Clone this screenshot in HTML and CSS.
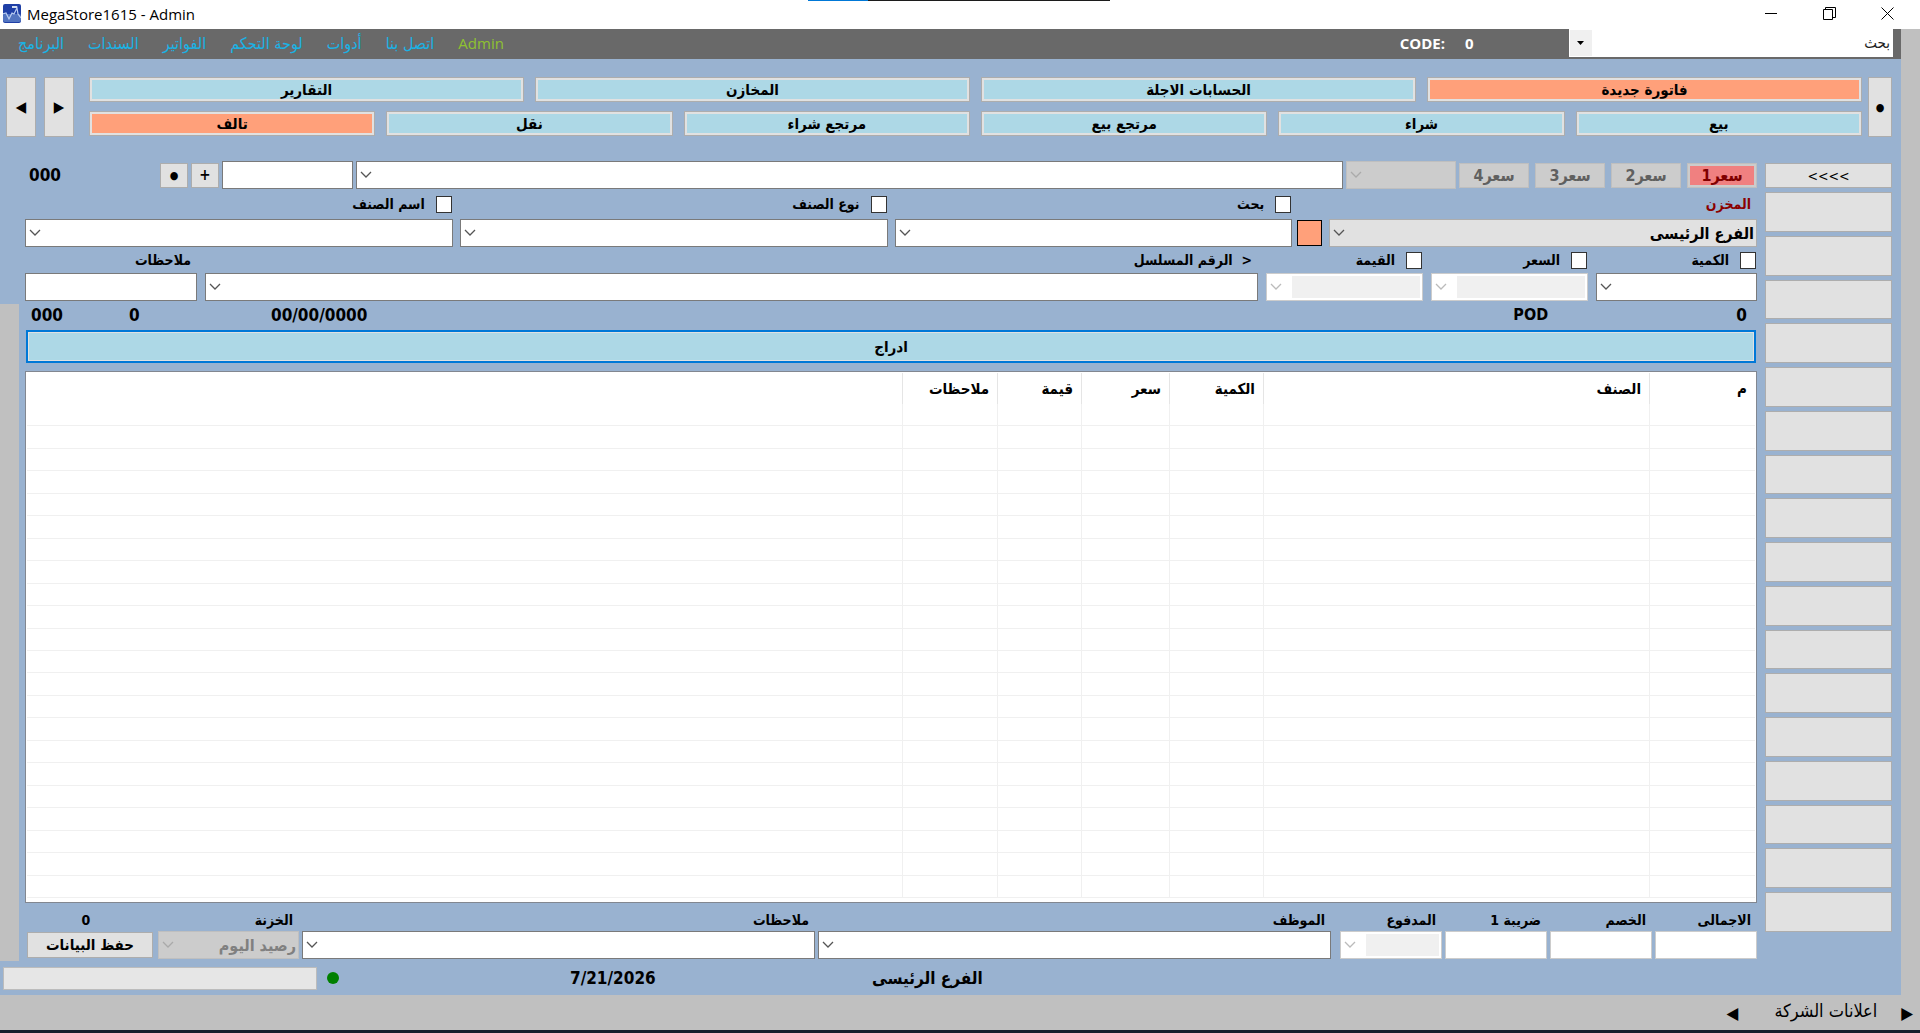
FILE: index.html
```html
<!DOCTYPE html>
<html lang="ar">
<head>
	<meta charset="utf-8">
	<title>MegaStore1615 - Admin</title>
	<link rel="stylesheet" href="styles.css">
</head>
<body>
<header class="titlebar">
	<svg class="logo" width="18" height="19" viewBox="0 0 18 19">
		<rect width="18" height="19" rx="2" fill="#1f3fa6"/>
		<rect y="10" width="18" height="8" rx="2" fill="#5274c0"/>
		<path d="M0 10l3-1 3 6 3-6 2 1 3-6 1 6 3 4" fill="none" stroke="#b9cdf2" stroke-width="1.2"/>
		<rect x="9" y="2" width="5" height="2" fill="#d5dff0"/>
	</svg>
	<span class="caption">MegaStore1615 - Admin</span>
	<span class="dock"></span>
	<button class="win" aria-label="Minimize"><svg width="13" height="13"><path d="M0 6.5h12" stroke="#000"/></svg></button>
	<button class="win" aria-label="Restore"><svg width="13" height="13"><path d="M.5 2.5h9v10h-9zM2.5 2.5v-2h10v10h-3" fill="none" stroke="#000"/></svg></button>
	<button class="win" aria-label="Close"><svg width="13" height="13"><path d="M.5 .5l12 12M12.5 .5l-12 12" stroke="#000"/></svg></button>
</header>

<div class="frame">
<div class="screen">
	<nav class="menubar">
		<a href="#">البرنامج</a>
		<a href="#">السندات</a>
		<a href="#">الفواتير</a>
		<a href="#">لوحة التحكم</a>
		<a href="#">أدوات</a>
		<a href="#">اتصل بنا</a>
		<a href="#" class="user">Admin</a>
		<span class="code">CODE:</span>
		<span class="codenum">0</span>
		<select class="search" aria-label="بحث"><option>بحث</option></select>
	</nav>

	<div class="toolbar">
		<button class="btn tall">◀</button>
		<button class="btn tall">▶</button>
		<div class="tabs">
			<div class="tabrow">
				<button class="btn tab">التقارير</button>
				<button class="btn tab">المخازن</button>
				<button class="btn tab">الحسابات الاجلة</button>
				<button class="btn tab on">فاتورة جديدة</button>
			</div>
			<div class="tabrow">
				<button class="btn tab on">تالف</button>
				<button class="btn tab">نقل</button>
				<button class="btn tab">مرتجع شراء</button>
				<button class="btn tab">مرتجع بيع</button>
				<button class="btn tab">شراء</button>
				<button class="btn tab">بيع</button>
			</div>
		</div>
		<button class="btn dot">●</button>
	</div>

	<div class="main">
		<div class="work">
			<div class="entry">
				<div class="row top">
					<span class="count">000</span>
					<button class="btn small bullet">●</button>
					<button class="btn small">+</button>
					<input class="box qty" type="text" aria-label="الكود">
					<select class="box grow" aria-label="العميل"><option></option></select>
					<select class="box flat" aria-label="السعر" disabled><option></option></select>
					<div class="prices">
						<button class="btn" disabled>سعر4</button>
						<button class="btn" disabled>سعر3</button>
						<button class="btn" disabled>سعر2</button>
						<button class="btn picked" disabled>سعر1</button>
					</div>
				</div>

				<div class="row names">
					<div class="field">
						<div class="lbl"><label for="c_name">اسم الصنف</label><input type="checkbox" id="c_name"></div>
						<select class="box" aria-label="اسم الصنف"><option></option></select>
					</div>
					<div class="field">
						<div class="lbl"><label for="c_type">نوع الصنف</label><input type="checkbox" id="c_type"></div>
						<select class="box" aria-label="نوع الصنف"><option></option></select>
					</div>
					<div class="pair">
						<div class="field">
							<div class="lbl"><label for="c_find">بحث</label><input type="checkbox" id="c_find"></div>
							<select class="box" aria-label="بحث"><option></option></select>
						</div>
						<button class="swatch" aria-label="لون"></button>
					</div>
					<div class="field">
						<div class="lbl plain red"><label for="store">المخزن</label></div>
						<select class="box list" id="store"><option>الفرع الرئيسى</option></select>
					</div>
				</div>

				<div class="row amounts">
					<div class="field">
						<div class="lbl plain"><label for="note">ملاحظات</label></div>
						<input class="box" type="text" id="note">
					</div>
					<div class="field">
						<div class="lbl plain"><label for="serial" dir="ltr">الرقم المسلسل &nbsp;&lrm;&gt;</label></div>
						<select class="box" id="serial"><option></option></select>
					</div>
					<div class="field">
						<div class="lbl"><label for="c_val">القيمة</label><input type="checkbox" id="c_val"></div>
						<select class="box off" aria-label="القيمة" disabled><option></option></select>
					</div>
					<div class="field">
						<div class="lbl"><label for="c_price">السعر</label><input type="checkbox" id="c_price"></div>
						<select class="box off" aria-label="السعر" disabled><option></option></select>
					</div>
					<div class="field">
						<div class="lbl"><label for="c_qty">الكمية</label><input type="checkbox" id="c_qty"></div>
						<select class="box" aria-label="الكمية"><option></option></select>
					</div>
				</div>
			</div>

			<div class="invoice">
				<div class="totals">
					<span class="t1">000</span>
					<span class="t2">0</span>
					<span class="t3">00/00/0000</span>
					<span class="t4">POD</span>
					<span>0</span>
				</div>
				<button class="insert">ادراج</button>
				<div class="grid">
					<table>
						<thead>
							<tr>
								<th class="c1">م</th>
								<th class="c2">الصنف</th>
								<th class="c3">الكمية</th>
								<th class="c4">سعر</th>
								<th class="c5">قيمة</th>
								<th class="c6">ملاحظات</th>
								<th></th>
							</tr>
						</thead>
						<tbody id="rows"></tbody>
					</table>
				</div>
				<div class="pay">
					<div class="field">
						<div class="lbl mid">0</div>
						<button class="btn save">حفظ البيانات</button>
					</div>
					<div class="field">
						<div class="lbl plain"><label for="safe">الخزنة</label></div>
						<select class="box flat" id="safe" disabled><option>رصيد اليوم</option></select>
					</div>
					<div class="field">
						<div class="lbl plain"><label for="note2">ملاحظات</label></div>
						<select class="box" id="note2"><option></option></select>
					</div>
					<div class="field">
						<div class="lbl plain"><label for="emp">الموظف</label></div>
						<select class="box" id="emp"><option></option></select>
					</div>
					<div class="field paid">
						<div class="lbl plain"><label for="paid">المدفوع</label></div>
						<select class="box off" id="paid" disabled><option></option></select>
					</div>
					<div class="field">
						<div class="lbl plain"><label for="tax" dir="rtl">ضريبة 1</label></div>
						<input class="box light" type="text" id="tax">
					</div>
					<div class="field">
						<div class="lbl plain"><label for="disc">الخصم</label></div>
						<input class="box light" type="text" id="disc">
					</div>
					<div class="field">
						<div class="lbl plain"><label for="total">الاجمالى</label></div>
						<input class="box light" type="text" id="total">
					</div>
				</div>
			</div>
		</div>

		<div class="side" id="side">
			<button class="btn first">&lt;&lt;&lt;&lt;</button>
		</div>
	</div>

	<div class="status">
		<div class="progress"></div>
		<span class="led"></span>
		<span class="date">7/21/2026</span>
		<span>الفرع الرئيسى</span>
	</div>
</div>
</div>

<footer class="news">
	<span>◀</span>
	<a href="#">اعلانات الشركة</a>
	<span>▶</span>
</footer>
<div class="edge"></div>

<script type="text/javascript">
var i, rows = "", side = document.getElementById("side");
for (i = 0; i < 22; i++) {
	rows += "<tr><td></td><td></td><td></td><td></td><td></td><td></td><td></td></tr>";
}
document.getElementById("rows").innerHTML = rows;
// quick item buttons, empty until a group is loaded
for (i = 1; i <= 17; i++) {
	var b = document.createElement("button");
	b.className = "btn";
	b.setAttribute("aria-label", "صنف " + i);
	side.appendChild(b);
}
</script>
</body>
</html>
```

FILE: styles.css
```css
* {
	box-sizing: border-box;
}
html, body {
	height: 100%;
}
body {
	margin: 0;
	display: flex;
	flex-direction: column;
	background: #c0c0c0;
	color: #000;
	font: bold 14px "DejaVu Sans Condensed", "DejaVu Sans", sans-serif;
}
button, input, select {
	font: inherit;
	color: inherit;
	margin: 0;
	padding: 0;
	border-radius: 0;
}
a {
	color: inherit;
	text-decoration: none;
}

/* window title */
.titlebar {
	height: 29px;
	flex: none;
	display: flex;
	align-items: center;
	padding: 0 4px 2px 3px;
	background: #fff;
	position: relative;
	font: 15px "Open Sans", sans-serif;
}
.caption {
	flex: 1;
	padding-left: 6px;
}
.dock {
	position: absolute;
	top: 0;
	left: 42.1%;
	width: 302px;
	height: 1px;
	background: linear-gradient(90deg, #0078d7 60px, #1c1c1c 60px);
}
.win {
	width: 58px;
	height: 27px;
	border: 0;
	background: none;
}
.win svg {
	display: block;
	margin: 0 auto;
}

.frame {
	flex: 1;
	display: flex;
	padding-right: 19px;
}
.screen {
	flex: 1;
	display: flex;
	flex-direction: column;
	background: #99b2d0;
}

/* menu */
.menubar {
	height: 30px;
	display: flex;
	align-items: center;
	gap: 24px;
	padding: 0 8px 2px 18px;
	background: #696969;
	color: #19b3e6;
	font: 16px "DejaVu Sans Condensed", sans-serif;
}
.user {
	color: #8fc131;
	font: 15px "Open Sans", sans-serif;
}
.code, .codenum {
	color: #fff;
	font: bold 15px "Open Sans", sans-serif;
}
.code {
	margin-left: auto;
}
.codenum {
	width: 80px;
	margin-left: -4px;
}
.search {
	appearance: none;
	direction: rtl;
	width: 324px;
	height: 28px;
	padding: 0 2px;
	border: 1px solid #fff;
	color: #222;
	font: 15px "DejaVu Sans Condensed", sans-serif;
	background: #fff url("data:image/svg+xml,%3Csvg xmlns='http://www.w3.org/2000/svg' width='22' height='26'%3E%3Cpath fill='%23f0f0f0' d='M0 0h22v26H0z'/%3E%3Cpath d='M7 11h7l-3.5 4z'/%3E%3C/svg%3E") no-repeat left center;
}

.btn {
	border: 1px solid #adadad;
	background: #e1e1e1;
	text-align: center;
	font-size: 15px;
}

/* top buttons */
.toolbar {
	display: flex;
	height: 78px;
	padding: 18px 9px 0 6px;
}
.tall {
	width: 30px;
	margin-right: 8px;
}
.dot {
	width: 24px;
	margin-left: 6px;
}
.dot, .bullet {
	font-size: 11px;
}
.tabs {
	flex: 1;
	margin-left: 7px;
	display: flex;
	flex-direction: column;
	gap: 9px;
}
.tabrow {
	display: flex;
	gap: 11px;
}
.tab {
	flex: 1;
	height: 25px;
	background: #add8e6;
	box-shadow: inset 0 0 0 2px #e1e1e1;
}
.tab.on {
	background: #ffa07a;
}

.main {
	flex: 1;
	display: flex;
	gap: 8px;
	padding: 24px 9px 0 0;
}
.work {
	flex: 1;
	display: flex;
	flex-direction: column;
}
.entry {
	padding-left: 25px;
}
.row {
	display: grid;
}

/* text boxes and lists */
.box {
	width: 100%;
	height: 28px;
	border: 1px solid #7a7a7a;
	background: #fff;
	direction: rtl;
	padding: 0 2px;
	font-size: 16px;
}
select.box {
	appearance: none;
	background: #fff url("data:image/svg+xml,%3Csvg xmlns='http://www.w3.org/2000/svg' width='20' height='26'%3E%3Cpath d='M4 10l5 5 5-5' fill='none' stroke='%23555' stroke-width='1.3'/%3E%3C/svg%3E") no-repeat left center;
}
select.list {
	border-color: #adadad;
	background-color: #e1e1e1;
}
select.flat, select.off {
	opacity: 1;
	color: #808080;
	border-color: #bfbfbf;
	background-color: #ccc;
	background-image: url("data:image/svg+xml,%3Csvg xmlns='http://www.w3.org/2000/svg' width='20' height='26'%3E%3Cpath d='M4 10l5 5 5-5' fill='none' stroke='%23aaa' stroke-width='1.3'/%3E%3C/svg%3E");
}
select.off {
	border-color: #ccc;
	background-color: #f0f0f0;
	background-image: url("data:image/svg+xml,%3Csvg xmlns='http://www.w3.org/2000/svg' width='25' height='26'%3E%3Cpath d='M0 0h25v26H0z' fill='%23fff'/%3E%3Cpath d='M4 10l5 5 5-5' fill='none' stroke='%23bbb' stroke-width='1.3'/%3E%3C/svg%3E");
	box-shadow: inset 0 0 0 2px #fff;
}
.light {
	border-color: #ccc;
}

.top {
	grid-template-columns: 132px 28px 28px 131px 1fr 110px 298px;
	gap: 3px;
	align-items: center;
}
.count {
	padding-left: 4px;
	font-size: 17px;
}
.small {
	height: 25px;
}
.prices {
	display: flex;
	gap: 6px;
}
.prices .btn {
	flex: 1;
	height: 25px;
	border-color: #bfbfbf;
	background: #ccc;
	color: #606060;
	font-size: 16px;
}
.prices .picked {
	background: #f08080;
	box-shadow: inset 0 0 0 2px #ccc;
	color: #800000;
}

.field {
	display: flex;
	flex-direction: column;
	flex: 1;
}
.lbl {
	height: 30px;
	display: flex;
	align-items: center;
	justify-content: flex-end;
	gap: 11px;
	padding-right: 1px;
}
.plain {
	padding-right: 6px;
}
.red {
	color: #8b0000;
}
input[type=checkbox] {
	appearance: none;
	width: 16px;
	height: 17px;
	border: 1px solid #333;
	background: #fff;
}
.names {
	grid-template-columns: repeat(4, 1fr);
	gap: 7px;
}
.pair {
	display: flex;
	align-items: flex-end;
	gap: 5px;
}
.swatch {
	width: 25px;
	height: 26px;
	margin-bottom: 1px;
	border: 1px solid #000;
	background: #ffa07a;
}
.amounts {
	grid-template-columns: 172px 1fr 157px 157px 161px;
	gap: 8px;
}
.amounts .lbl {
	height: 26px;
}

/* invoice, with the grey strip on its left */
.invoice {
	flex: 1;
	display: flex;
	flex-direction: column;
	margin-top: 3px;
	padding-left: 6px;
	border-left: 19px solid #c0c0c0;
}
.totals {
	height: 26px;
	display: flex;
	padding: 0 10px 0 6px;
	font-size: 17px;
	line-height: 22px;
}
.t1 {
	width: 98px;
}
.t2 {
	width: 142px;
}
.t3 {
	flex: 1;
}
.t4 {
	width: 223px;
	font-size: 16px;
}
.insert {
	height: 33px;
	margin: 0 1px 8px;
	border: 2px solid #0078d7;
	background: #add8e6;
	box-shadow: inset 0 0 0 1px #e1e1e1;
	font-size: 15px;
}
.grid {
	flex: 1;
	display: flex;
	padding: 1px 1px 4px;
	border: 1px solid #828790;
	background: #fff;
}
table {
	width: 100%;
	direction: rtl;
	table-layout: fixed;
	border-collapse: separate;
	border-spacing: 0;
}
th {
	height: 31px;
	padding: 0 8px;
	text-align: right;
	border-left: 1px solid #e5e5e5;
	font-size: 15px;
}
td {
	padding: 0;
	border-left: 1px solid #f0f0f0;
	border-bottom: 1px solid #f0f0f0;
}
th:last-child, td:last-child {
	border-left: 0;
}
.c1 {
	width: 106px;
}
.c2 {
	width: 386px;
}
.c3 {
	width: 94px;
}
.c4 {
	width: 88px;
}
.c5 {
	width: 84px;
}
.c6 {
	width: 95px;
}

.pay {
	display: grid;
	grid-template-columns: 130px 141px 1fr 1fr 108px repeat(3, 102px);
	gap: 3px;
	padding-bottom: 2px;
}
.pay .lbl {
	height: 28px;
	padding-top: 5px;
}
.pay .mid {
	justify-content: center;
	padding-right: 8px;
}
.paid {
	padding-left: 6px;
}
.save {
	height: 26px;
	margin: 1px 2px;
}

/* quick items */
.side {
	width: 127px;
	display: flex;
	flex-direction: column;
	gap: 4px;
	padding: 2px 0 29px;
}
.side .btn {
	flex: 1;
}
.side .first {
	flex: none;
	height: 25px;
	font-weight: normal;
	font-size: 14px;
}

.status {
	height: 34px;
	display: flex;
	align-items: center;
	padding-left: 3px;
	font-size: 17px;
}
.progress {
	width: 314px;
	height: 23px;
	border: 1px solid #bcbcbc;
	background: #e6e6e6;
}
.led {
	width: 12px;
	height: 12px;
	margin: 0 231px 0 10px;
	border-radius: 50%;
	background: #008000;
}
.date {
	width: 302px;
}

.news {
	height: 35px;
	flex: none;
	display: flex;
	align-items: center;
	justify-content: flex-end;
	padding-right: 7px;
	gap: 24px;
	font-size: 17px;
}
.news a {
	padding: 0 0 4px 12px;
	font-size: 18px;
	font-weight: normal;
}
.edge {
	height: 3px;
	flex: none;
	background: #18202e;
}
```
